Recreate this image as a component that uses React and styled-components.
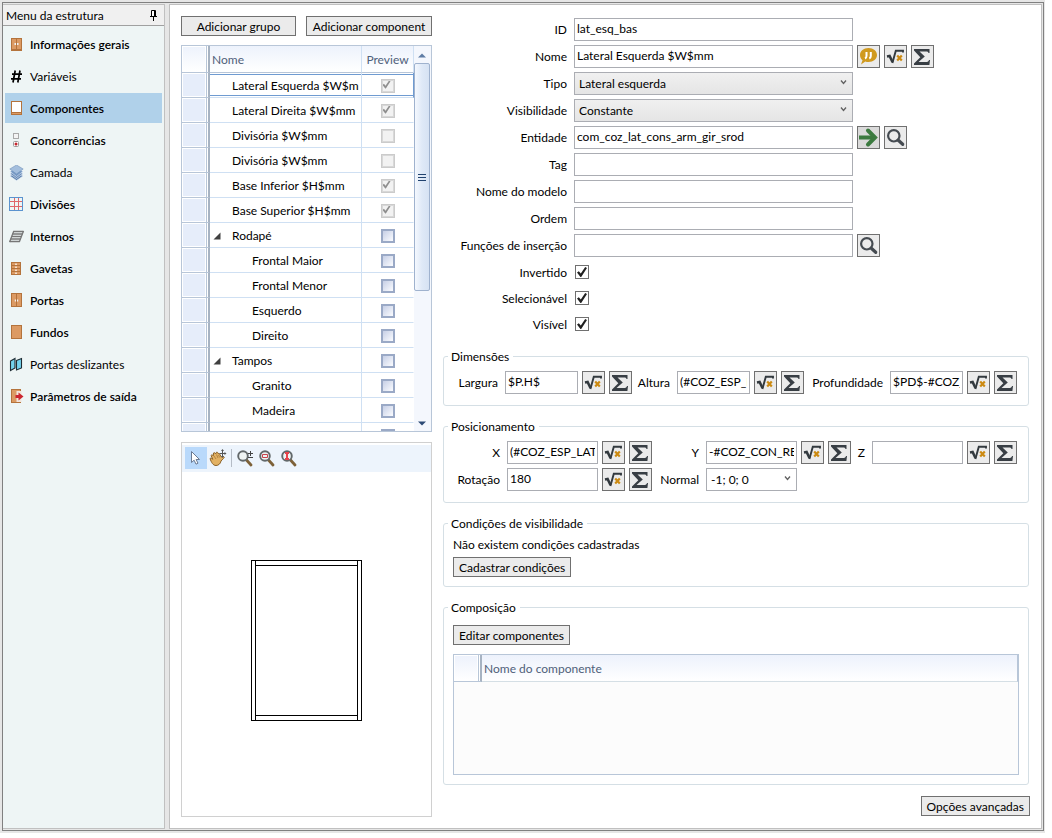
import React, { Fragment, useState } from 'react'
import styled, { createGlobalStyle, css, ThemeProvider } from 'styled-components'

const theme = {
  colors: {
    chrome: '#e6e6e6',
    chromeDark: '#808080',
    chromeLine: '#c0c0c0',
    side: '#eef5f5',
    sideActive: '#b0d1ea',
    control: '#ebebeb',
    controlBorder: '#707070',
    inputBorder: '#abadb3',
    grid: '#b8c6d8',
    gridLight: '#cfe0f3',
    gridHead: '#e6edfa',
    gridText: '#4f607a',
    group: '#d5dfe5',
    focus: '#6f9bd1'
  }
}

const GlobalStyle = createGlobalStyle`
  * {
    box-sizing: border-box;
  }

  body {
    background: #fff;
    color: #000;
    margin: 0;
  }

  body, button, input, select {
    font-family: Lato, 'Open Sans', sans-serif;
    font-size: 12px;
    line-height: 16px;
  }
`

/* ---------- window ---------- */

const Page = styled.div`
  display: flex;
  min-height: 100vh;
  padding: 0 7px 5px 0;
`

const Frame = styled.div`
  background: ${props => props.theme.colors.chrome};
  display: flex;
  flex: 1;
  padding: 2px 1px 2px 2px;
`

const Panes = styled.div`
  border: 1px solid ${props => props.theme.colors.chromeDark};
  display: flex;
  flex: 1;
  gap: 4px;
  min-width: 0;
  padding: 1px 1px 1px 0;
`

const Sidebar = styled.aside`
  background: ${props => props.theme.colors.side};
  border: 1px solid ${props => props.theme.colors.chromeLine};
  border-left: 0;
  display: flex;
  flex: 0 0 162px;
  flex-direction: column;
`

const SidebarHeader = styled.header`
  align-items: center;
  background: #f0f0f0;
  border-bottom: 1px solid #a0a0a0;
  display: flex;
  height: 21px;
  justify-content: space-between;
  padding: 1px 6px 0 3px;
`

const PinButton = styled.button`
  background: none;
  border: 0;
  display: flex;
  padding: 0;
`

const Menu = styled.nav`
  display: flex;
  flex-direction: column;
  gap: 2px;
  padding: 3px 2px;
`

const MenuItem = styled.a`
  align-items: center;
  background: ${props =>
    props.$active ? props.theme.colors.sideActive : 'transparent'};
  color: #000;
  display: flex;
  font-weight: ${props => (props.$bold ? 600 : 400)};
  gap: 5px;
  height: 30px;
  padding: 1px 0 0 4px;
  text-decoration: none;
  white-space: nowrap;

  svg {
    flex: none;
  }
`

const Content = styled.main`
  background: #fff;
  border: 1px solid ${props => props.theme.colors.chromeLine};
  display: flex;
  flex: 1;
  gap: 11px;
  min-width: 0;
  padding: 11px;
`

/* ---------- controls ---------- */

const Button = styled.button`
  background: ${props => props.theme.colors.control};
  border: 1px solid ${props => props.theme.colors.controlBorder};
  color: #000;
  height: 20px;
  overflow: hidden;
  padding: 2px 5px 0;
  white-space: nowrap;
`

const IconButton = styled.button`
  background: ${props =>
    props.$pressed ? '#dadada' : props.theme.colors.control};
  border: 1px solid ${props => props.theme.colors.controlBorder};
  display: flex;
  flex: none;
  height: 23px;
  padding: 0;
  width: 23px;
`

const TextBox = styled.input.attrs({ type: 'text' })`
  background: #fff;
  border: 1px solid ${props => props.theme.colors.inputBorder};
  color: #000;
  height: 23px;
  min-width: 0;
  outline: 0;
  padding: 0 2px 3px;
  width: 100%;
`

const SelectWrapper = styled.div`
  height: 23px;
  position: relative;

  svg {
    pointer-events: none;
    position: absolute;
    right: 6px;
    top: 7px;
  }
`

const SelectBox = styled.select`
  appearance: none;
  background: ${props =>
    props.$plain ? '#fff' : 'linear-gradient(#f0f0f0, #e5e5e5)'};
  border: 1px solid ${props => props.theme.colors.inputBorder};
  border-radius: 0;
  color: #000;
  height: 23px;
  padding: 1px 4px 0;
  width: 100%;
`

const CheckBox = styled.input.attrs({ type: 'checkbox' })`
  appearance: none;
  background: #fff;
  border: 1px solid ${props => props.theme.colors.controlBorder};
  display: grid;
  height: 14px;
  margin: 0;
  place-content: center;
  width: 14px;

  &:checked::after {
    background: #212121;
    clip-path: polygon(0 55%, 18% 42%, 38% 66%, 82% 0, 100% 10%, 42% 100%, 34% 100%);
    content: '';
    height: 10px;
    width: 10px;
  }
`

const GridCheckBox = styled(CheckBox)`
  border-color: #9aa9c6;
  margin: 1px auto 0;

  &::before {
    background: linear-gradient(135deg, #c6cfe6, #fbfcff);
    border: 1px solid #9aa9c6;
    content: '';
    grid-area: 1 / 1;
    height: 10px;
    width: 10px;
  }

  &:checked::after {
    grid-area: 1 / 1;
    height: 8px;
    margin: 1px;
    width: 8px;
  }

  &:disabled {
    border-color: #cbcbcb;
  }

  &:disabled::before {
    background: #f2f2f2;
    border-color: #d8d8d8;
  }

  &:disabled::after {
    background: #8f8f8f;
  }
`

/* ---------- left column ---------- */

const LeftColumn = styled.section`
  display: flex;
  flex: 0 0 251px;
  flex-direction: column;
`

const ButtonBar = styled.div`
  display: grid;
  gap: 10px;
  grid-template-columns: 115fr 126fr;
  margin-bottom: 9px;
`

const ListBox = styled.div`
  border: 1px solid ${props => props.theme.colors.grid};
  display: flex;
  flex: none;
  height: 387px;
  margin-bottom: 10px;
  overflow: hidden;
`

const ListTable = styled.table`
  align-self: flex-start;
  border-collapse: separate;
  border-spacing: 0;
  flex: 1;
  min-width: 0;
  table-layout: fixed;
  width: 100%;
`

const HeadCell = styled.th`
  background: linear-gradient(#edf2fc, #fff);
  border-bottom: 1px solid ${props => props.theme.colors.grid};
  border-right: 1px solid ${props => props.theme.colors.gridLight};
  color: ${props => props.theme.colors.gridText};
  font-weight: 400;
  height: 27px;
  padding: 2px 2px 0;
  text-align: ${props => (props.$center ? 'center' : 'left')};
  width: ${props => props.$width || 'auto'};
`

// selector column: thin line, white gap, then the frozen-column divider
const selectorEdge = css`
  border-right: 2px solid #a7b3c2;
  box-shadow: inset -1px 0 #fff, inset -2px 0 ${props => props.theme.colors.grid},
    inset -3px 0 #fff, inset 1px 1px #fff, inset 0 -1px #fff;
  padding: 0;
`

const SelectorHead = styled(HeadCell)`
  ${selectorEdge}
`

const SelectorCell = styled.td`
  background: ${props => props.theme.colors.gridHead};
  border-bottom: 1px solid ${props => props.theme.colors.grid};
  ${selectorEdge}
`

const focusLines = css`
  background: linear-gradient(
        ${props => props.theme.colors.focus},
        ${props => props.theme.colors.focus}
      )
      0 1px / 100% 1px no-repeat,
    linear-gradient(
        ${props => props.theme.colors.focus},
        ${props => props.theme.colors.focus}
      )
      0 22px / 100% 1px no-repeat;
`

const NameCell = styled.td`
  border-bottom: 1px solid ${props => props.theme.colors.gridLight};
  border-right: 1px solid ${props => props.theme.colors.gridLight};
  height: 25px;
  overflow: hidden;
  padding: 2px 2px 0 0;
  ${props => props.$focused && focusLines};
`

const NameText = styled.div`
  align-items: center;
  display: flex;
  overflow: hidden;
  padding-left: ${props => (props.$level === 2 ? '42px' : '22px')};
  position: relative;
  white-space: nowrap;
`

const Expander = styled.svg`
  left: 3px;
  position: absolute;
  top: 4px;
`

const PreviewCell = styled.td`
  border-bottom: 1px solid ${props => props.theme.colors.gridLight};
  border-right: 1px solid
    ${props => (props.$focused ? props.theme.colors.focus : '#fff')};
  padding: 0;
  ${props => props.$focused && focusLines};
`

const ScrollTrack = styled.div`
  align-items: center;
  background: #f4f7fd;
  display: flex;
  flex: 0 0 17px;
  flex-direction: column;
  padding: 0 1px 0 0;
`

const ScrollArrow = styled.button`
  background: none;
  border: 0;
  display: flex;
  flex: none;
  height: 17px;
  justify-content: center;
  padding: 7px 0 0;
  width: 16px;
`

const ScrollThumb = styled.div`
  align-items: center;
  background: linear-gradient(90deg, #f4f8fe, #dfe9f7 50%, #d6e2f3);
  border: 1px solid #9fb2ce;
  border-radius: 2px;
  display: flex;
  flex: 0 0 228px;
  justify-content: center;
  width: 16px;
`

const ScrollRest = styled.div`
  flex: 1;
`

const PreviewBox = styled.div`
  border: 1px solid #d0d0d0;
  display: flex;
  flex: 1;
  flex-direction: column;
  padding-top: 2px;
`

const Toolbar = styled.div`
  align-items: center;
  background: #edf4fc;
  display: flex;
  flex: none;
  height: 27px;
  padding: 0 3px 1px;
`

const Tool = styled.button`
  align-items: center;
  background: ${props => (props.$active ? '#b9d9fb' : 'transparent')};
  border: 0;
  display: flex;
  height: 22px;
  justify-content: center;
  padding: 0;
  width: 22px;
`

const ToolSeparator = styled.span`
  background: #b5bcc6;
  height: 18px;
  margin: 0 2px;
  width: 1px;
`

const Canvas = styled.div`
  display: flex;
  flex: 1;
  justify-content: center;
  padding: 88px 0;
`

/* ---------- form ---------- */

const FormColumn = styled.section`
  display: flex;
  flex: 1;
  flex-direction: column;
  gap: 12px;
  min-width: 0;
  padding: 2px 0 1px;
`

const Fields = styled.div`
  display: flex;
  flex-direction: column;
  gap: 4px;
  padding-bottom: 1px;
`

const FieldRow = styled.div`
  align-items: center;
  display: grid;
  gap: 4px;
  grid-template-columns: 127px minmax(0, 279px) 23px 23px 23px;
  min-height: ${props => (props.$check ? '22px' : '23px')};

  ${CheckBox} {
    margin-left: 1px;
  }
`

const Label = styled.label`
  padding-right: 3px;
  padding-top: 1px;
  text-align: right;
  white-space: nowrap;
`

const Group = styled.fieldset`
  border: 1px solid ${props => props.theme.colors.group};
  border-radius: 3px;
  margin: 0 1px 0 0;
  min-width: 0;
  padding: ${props => (props.$roomy ? '9px' : '6px 11px 11px 9px')};
`

const GroupTitle = styled.legend`
  height: 17px;
  line-height: 17px;
  margin-left: -5px;
  padding: 0 4px 0 3px;
`

const DimensionGrid = styled.div`
  align-items: center;
  display: grid;
  gap: 4px;
  grid-template-columns: 48px 1fr 23px 23px 37px 1fr 23px 23px 78px 1fr 23px 23px;
`

const PositionGrid = styled(DimensionGrid)`
  grid-template-columns: 50px 1fr 23px 23px 46px 1fr 23px 23px 13px 1fr 23px 23px;
`

const EmptyNote = styled.p`
  margin: -4px 0 4px;
`

const CompositionTable = styled.table`
  background: #fcfcfc;
  border: 1px solid ${props => props.theme.colors.grid};
  border-spacing: 0;
  height: 121px;
  margin-top: 9px;
  table-layout: fixed;
  width: 100%;
`

const CompositionHead = styled(HeadCell)`
  border-bottom-color: ${props => props.theme.colors.group};
  border-right-color: ${props => props.theme.colors.grid};
`

const FooterButton = styled(Button)`
  align-self: flex-end;
  margin-top: -1px;
`

/* ---------- icons ---------- */

const WOOD = '#dc9a63'
const WOOD_DARK = '#b4733c'

const menuIcons = {
  cabinet: (
    <>
      <rect x="2.5" y="1.5" width="10" height="12" fill={WOOD} stroke={WOOD_DARK} />
      <path d="M7.5 2v10M2 12.5h11" stroke={WOOD_DARK} />
      <path d="M5.5 7h1.5M8 7h1.5" stroke="#efefef" strokeWidth="2" />
      <path d="M2.5 13v1M12.5 13v1" stroke={WOOD_DARK} />
    </>
  ),
  hash: (
    <path
      d="M6.2 1.5 4 13.5M11 1.5 8.8 13.5M3 5.2h10M2 9.8h10"
      fill="none"
      stroke="#000"
      strokeWidth="1.7"
    />
  ),
  component: (
    <>
      <rect x="2.5" y=".5" width="10" height="13" fill="#fff" stroke={WOOD_DARK} />
      <path d="M2 11.5h11" stroke={WOOD_DARK} />
      <path d="M3 12.5h9" stroke={WOOD} />
    </>
  ),
  options: (
    <>
      <rect x="4.5" y=".5" width="5" height="5" fill="#f4f4f4" stroke="#a9a9a9" />
      <rect x="4.5" y="8.5" width="5" height="5" rx="1" fill="#fff" stroke="#9a9a9a" />
      <circle cx="7" cy="11" r="1.5" fill="#c4262e" />
    </>
  ),
  layers: (
    <>
      <path d="M1 11 7.5 7l6.5 4-6.500 4.500z" fill="#5f83b0" stroke="#e4edf7" strokeWidth=".6" />
      <path d="M1 8.700 7.5 5 14 8.700 7.5 13.500z" fill="#6a8dba" stroke="#e4edf7" strokeWidth=".6" />
      <path d="M1 6.500 7.5 3 14 6.500 7.5 11.500z" fill="#7598c4" stroke="#e4edf7" strokeWidth=".6" />
      <path d="M.8 4 7.500 0 14.200 4 7.500 9z" fill="#a3bedd" stroke="#7393ba" strokeWidth=".6" />
    </>
  ),
  divisions: (
    <>
      <path d="M5.5 1v13M9.5 1v13M1 4.500h13M1 9.500h13" stroke="#e0666a" />
      <rect x=".5" y=".5" width="13" height="13" fill="none" stroke="#5b93cf" />
    </>
  ),
  shelves: (
    <g stroke="#777" strokeWidth="1.3">
      <path d="M4.500 2.500h10M3.500 5h10M2.500 7.500h10M1.500 10h10M.5 12.500h10" />
      <path d="M4.800 2 .6 13M14.500 2l-4.200 11" />
    </g>
  ),
  drawers: (
    <>
      <rect x="2.5" y="1.5" width="9" height="12" fill={WOOD} stroke={WOOD_DARK} />
      <path d="M2 4.500h10M2 7.500h10M2 10.500h10" stroke={WOOD_DARK} />
      <path d="M6 3.200h2M6 6.200h2M6 9.200h2M6 12.200h2" stroke="#fff" />
    </>
  ),
  doors: (
    <>
      <rect x="2.5" y=".5" width="10" height="13" fill={WOOD} stroke={WOOD_DARK} />
      <path d="M7.5 1v12" stroke={WOOD_DARK} />
      <path d="M5.800 7.500h1.200M8 7.500h1.200" stroke="#f3f3f3" strokeWidth="2" />
    </>
  ),
  back: <rect x="2.5" y=".5" width="10" height="13" fill={WOOD} stroke={WOOD_DARK} />,
  sliding: (
    <g stroke="#1f2c33" strokeWidth="1.1">
      <path d="M1.500 4 6 1.500V11l-4.500 2.500z" fill="#74d3ee" />
      <path d="M7.500 3.500 12.500 1.500V11L7.500 13z" fill="#74d3ee" />
    </g>
  ),
  output: (
    <>
      <rect x="2.5" y=".5" width="9" height="13" fill={WOOD} stroke={WOOD_DARK} />
      <path d="M7.500 2h5v11h-5z" fill="#f3e5da" />
      <path d="M6.500 6h3V3.500L14.500 7.500l-5 4V9h-3z" fill="#cb2630" />
    </>
  )
}

const MenuIcon = ({ name }) => (
  <svg width="16" height="16" viewBox="0 0 16 16" aria-hidden="true">
    {menuIcons[name]}
  </svg>
)

const ButtonIcon = ({ children }) => (
  <svg width="21" height="21" viewBox="1 1 21 21" fill="none" aria-hidden="true">
    {children}
  </svg>
)

const RootIcon = () => (
  <ButtonIcon>
    <path d="M3 11.500 5.600 11 8.500 17" stroke="#333a3f" strokeWidth="2.600" />
    <path d="M8.400 18 11.800 5.700H19V7.500" stroke="#333a3f" strokeWidth="1.900" />
    <path d="m13.200 10.500 4.600 5M17.800 10.500l-4.600 5" stroke="#cc8a12" strokeWidth="2.200" />
  </ButtonIcon>
)

const SumIcon = () => (
  <ButtonIcon>
    <path
      d="M3 4h15.500v4h-1c-.3-1.300-1-1.600-2.500-1.600H8.500l5.300 5.100-6.300 5.600H15c1.700 0 2.600-.4 3-2h1l-.6 4.900H3v-1.600l6.300-6.100L3 5.600z"
      fill="#383e44"
    />
  </ButtonIcon>
)

const SearchIcon = () => (
  <ButtonIcon>
    <circle cx="9.800" cy="9.800" r="5.700" stroke="#454b51" strokeWidth="2.200" />
    <path d="m14.300 14.300 4.400 4" stroke="#454b51" strokeWidth="3.200" strokeLinecap="round" />
  </ButtonIcon>
)

const GoIcon = () => (
  <ButtonIcon>
    <path d="M2 11.500h16" stroke="#3b7a3f" strokeWidth="4" />
    <path d="m11 4.500 7 7-7 7" stroke="#3b7a3f" strokeWidth="4" strokeLinecap="round" />
  </ButtonIcon>
)

const CommentIcon = () => (
  <ButtonIcon>
    <path
      d="M11.500 3c4.900 0 8.500 3.100 8.500 7s-3.600 7-8.500 7c-1.300 0-2.200-.1-3.200-.5L4 19.500l1.500-4.300C4 13.900 3 12.100 3 10c0-3.900 3.600-7 8.500-7z"
      fill="#d09a1e"
    />
    <path d="M9.500 7v4c0 1.500-.4 2-1.500 2.500M13.800 7v4c0 1.500-.4 2-1.500 2.500" stroke="#fff" strokeWidth="2" />
  </ButtonIcon>
)

const PinIcon = () => (
  <svg width="9" height="11" viewBox="0 0 9 11" aria-hidden="true">
    <path d="M2.500 6V.5h4V6" fill="#fff" stroke="#000" />
    <path d="M5.500 1v5M1 6.500h7M4.500 7v4" stroke="#000" />
  </svg>
)

const Lens = ({ children }) => (
  <svg width="18" height="18" viewBox="0 0 18 18" fill="none" aria-hidden="true">
    <path d="m10.500 11 4.500 5" stroke="#7d6138" strokeWidth="2.800" strokeLinecap="round" />
    <circle cx="7" cy="7" r="4.800" fill="#eef3f3" stroke="#62686a" strokeWidth="1.900" />
    {children}
  </svg>
)

const CursorIcon = () => (
  <svg width="18" height="18" viewBox="0 0 18 18" aria-hidden="true">
    <path
      d="M4.500 2.500v11l2.600-2.300 1.900 4 2-1-1.900-3.700h3.400z"
      fill="#fff"
      stroke="#6b7b93"
    />
  </svg>
)

const HandIcon = () => (
  <svg width="18" height="18" viewBox="0 0 18 18" fill="none" aria-hidden="true">
    <path
      d="M1 9.500c1-.8 2 .2 2.800.8L2 6.500c.8-1 1.700-.5 2.300.3L4.500 4c1-.8 1.800 0 2 1l1-1.800c1-.2 1.600.6 1.600 1.500 1-.4 1.700.1 1.900 1.100l1.400 2.200 2.200-.5c1 .5.6 1.500-.2 2L12 12c-.6 2.800-2.500 4.500-5 4.500-3 0-4.600-3-6-7z"
      fill="#e2b163"
      stroke="#8a6128"
    />
    <path d="m5 7 2 3M7.500 5.500l1.500 3.500M9.500 6l1.200 2.500" stroke="#a87a38" strokeWidth=".8" />
    <path d="M13.500 1v7M10.500 4.500h6" stroke="#555" />
    <path d="m13.500 0-1.500 2h3zM13.500 9 12 7h3zM17.500 4.500l-2-1.500v3z" fill="#555" />
  </svg>
)

const Chevron = () => (
  <svg width="7" height="7" viewBox="0 0 7 7" fill="none" aria-hidden="true">
    <path d="m1 1.500 2.500 3 2.500-3" stroke="#606060" strokeWidth="1.300" />
  </svg>
)

const CabinetDrawing = () => (
  <svg width="111" height="161" viewBox="0 0 111 161" fill="none" stroke="#000">
    <rect x=".5" y=".5" width="110" height="160" />
    <path d="M4.500 0v161M106.500 0v161M4 5.500h103M4 155.500h103" />
  </svg>
)

/* ---------- data ---------- */

const MENU = [
  { label: 'Informações gerais', icon: 'cabinet', bold: true },
  { label: 'Variáveis', icon: 'hash' },
  { label: 'Componentes', icon: 'component', bold: true },
  { label: 'Concorrências', icon: 'options', bold: true },
  { label: 'Camada', icon: 'layers' },
  { label: 'Divisões', icon: 'divisions', bold: true },
  { label: 'Internos', icon: 'shelves', bold: true },
  { label: 'Gavetas', icon: 'drawers', bold: true },
  { label: 'Portas', icon: 'doors', bold: true },
  { label: 'Fundos', icon: 'back', bold: true },
  { label: 'Portas deslizantes', icon: 'sliding' },
  { label: 'Parâmetros de saída', icon: 'output', bold: true }
]

const COMPONENTS = [
  { name: 'Lateral Esquerda $W$mm', locked: true, checked: true, focused: true },
  { name: 'Lateral Direita $W$mm', locked: true, checked: true },
  { name: 'Divisória $W$mm', locked: true },
  { name: 'Divisória $W$mm', locked: true },
  { name: 'Base Inferior $H$mm', locked: true, checked: true },
  { name: 'Base Superior $H$mm', locked: true, checked: true },
  { name: 'Rodapé', parent: true },
  { name: 'Frontal Maior', level: 2 },
  { name: 'Frontal Menor', level: 2 },
  { name: 'Esquerdo', level: 2 },
  { name: 'Direito', level: 2 },
  { name: 'Tampos', parent: true },
  { name: 'Granito', level: 2 },
  { name: 'Madeira', level: 2 },
  { name: '', level: 2 }
]

const FormulaButtons = ({ field }) => (
  <Fragment>
    <IconButton type="button" aria-label={`Fórmula ${field}`}>
      <RootIcon />
    </IconButton>
    <IconButton type="button" aria-label={`Soma ${field}`}>
      <SumIcon />
    </IconButton>
  </Fragment>
)

const TextField = ({ id, label, value = '', children }) => (
  <FieldRow>
    <Label htmlFor={id}>{label}</Label>
    <TextBox id={id} defaultValue={value} />
    {children}
  </FieldRow>
)

const Select = ({ id, value, plain }) => (
  <SelectWrapper>
    <SelectBox id={id} $plain={plain} defaultValue={value}>
      <option>{value}</option>
    </SelectBox>
    <Chevron />
  </SelectWrapper>
)

const FormulaField = ({ id, label, value = '' }) => (
  <Fragment>
    <Label htmlFor={id}>{label}</Label>
    <TextBox id={id} defaultValue={value} />
    <FormulaButtons field={label} />
  </Fragment>
)

const CheckField = ({ id, label }) => (
  <FieldRow $check>
    <Label htmlFor={id}>{label}</Label>
    <CheckBox id={id} defaultChecked />
  </FieldRow>
)

const StructureMenu = () => {
  const [active, setActive] = useState('Componentes')
  return (
    <Sidebar>
      <SidebarHeader>
        <span>Menu da estrutura</span>
        <PinButton type="button" aria-label="Fixar">
          <PinIcon />
        </PinButton>
      </SidebarHeader>
      <Menu>
        {MENU.map(item => (
          <MenuItem
            key={item.label}
            href="#"
            $bold={item.bold}
            $active={item.label === active}
            onClick={() => setActive(item.label)}
          >
            <MenuIcon name={item.icon} />
            {item.label}
          </MenuItem>
        ))}
      </Menu>
    </Sidebar>
  )
}

const ComponentList = () => (
  <ListBox>
    <ListTable>
      <thead>
        <tr>
          <SelectorHead $width="28px" />
          <HeadCell>Nome</HeadCell>
          <HeadCell $center $width="52px">
            Preview
          </HeadCell>
        </tr>
      </thead>
      <tbody>
        {COMPONENTS.map((item, index) => (
          <tr key={index}>
            <SelectorCell />
            <NameCell $focused={item.focused}>
              <NameText $level={item.level}>
                {item.parent && (
                  <Expander width="8" height="8" viewBox="0 0 8 8">
                    <path d="M7.500.5v7h-7z" fill="#404040" />
                  </Expander>
                )}
                {item.name}
              </NameText>
            </NameCell>
            <PreviewCell $focused={item.focused}>
              <GridCheckBox
                aria-label={`Preview ${item.name}`}
                defaultChecked={item.checked}
                disabled={item.locked}
              />
            </PreviewCell>
          </tr>
        ))}
      </tbody>
    </ListTable>
    <ScrollTrack>
      <ScrollArrow type="button" aria-label="Rolar para cima">
        <svg width="8" height="5" viewBox="0 0 8 5">
          <path d="M0 4.500 4 .5l4 4z" fill="#5f7da5" />
        </svg>
      </ScrollArrow>
      <ScrollThumb>
        <svg width="8" height="7" viewBox="0 0 8 7">
          <path d="M0 .5h8M0 3.500h8M0 6.500h8" stroke="#20426f" />
        </svg>
      </ScrollThumb>
      <ScrollRest />
      <ScrollArrow type="button" aria-label="Rolar para baixo">
        <svg width="8" height="5" viewBox="0 0 8 5">
          <path d="M0 .5h8l-4 4z" fill="#2c4a75" />
        </svg>
      </ScrollArrow>
    </ScrollTrack>
  </ListBox>
)

const Preview = () => (
  <PreviewBox>
    <Toolbar>
      <Tool type="button" aria-label="Selecionar" $active>
        <CursorIcon />
      </Tool>
      <Tool type="button" aria-label="Mover">
        <HandIcon />
      </Tool>
      <ToolSeparator />
      <Tool type="button" aria-label="Zoom">
        <Lens>
          <path d="M12 4.500h5M14.500 2v5M12 8.500h5" stroke="#444" />
        </Lens>
      </Tool>
      <Tool type="button" aria-label="Zoom janela">
        <Lens>
          <path d="M4.500 5.500h5v3h-5z" stroke="#c8434b" />
        </Lens>
      </Tool>
      <Tool type="button" aria-label="Zoom extensão">
        <Lens>
          <path d="M5 4h4M5 10h4M7 4v6" stroke="#e8444c" strokeWidth="2" />
        </Lens>
      </Tool>
    </Toolbar>
    <Canvas>
      <CabinetDrawing />
    </Canvas>
  </PreviewBox>
)

const ComponentForm = () => (
  <FormColumn>
    <Fields>
      <TextField id="id" label="ID" value="lat_esq_bas" />
      <TextField id="nome" label="Nome" value="Lateral Esquerda $W$mm">
        <IconButton type="button" aria-label="Comentário">
          <CommentIcon />
        </IconButton>
        <FormulaButtons field="Nome" />
      </TextField>
      <FieldRow>
        <Label htmlFor="tipo">Tipo</Label>
        <Select id="tipo" value="Lateral esquerda" />
      </FieldRow>
      <FieldRow>
        <Label htmlFor="visibilidade">Visibilidade</Label>
        <Select id="visibilidade" value="Constante" />
      </FieldRow>
      <TextField id="entidade" label="Entidade" value="com_coz_lat_cons_arm_gir_srod">
        <IconButton type="button" aria-label="Ir para entidade" $pressed>
          <GoIcon />
        </IconButton>
        <IconButton type="button" aria-label="Procurar entidade">
          <SearchIcon />
        </IconButton>
      </TextField>
      <TextField id="tag" label="Tag" />
      <TextField id="modelo" label="Nome do modelo" />
      <TextField id="ordem" label="Ordem" />
      <TextField id="funcoes" label="Funções de inserção">
        <IconButton type="button" aria-label="Procurar função">
          <SearchIcon />
        </IconButton>
      </TextField>
      <CheckField id="invertido" label="Invertido" />
      <CheckField id="selecionavel" label="Selecionável" />
      <CheckField id="visivel" label="Visível" />
    </Fields>

    <Group>
      <GroupTitle>Dimensões</GroupTitle>
      <DimensionGrid>
        <FormulaField id="largura" label="Largura" value="$P.H$" />
        <FormulaField id="altura" label="Altura" value="(#COZ_ESP_LAT" />
        <FormulaField id="profundidade" label="Profundidade" value="$PD$-#COZ_CON" />
      </DimensionGrid>
    </Group>

    <Group>
      <GroupTitle>Posicionamento</GroupTitle>
      <PositionGrid>
        <FormulaField id="x" label="X" value="(#COZ_ESP_LAT" />
        <FormulaField id="y" label="Y" value="-#COZ_CON_REC" />
        <FormulaField id="z" label="Z" />
        <FormulaField id="rotacao" label="Rotação" value="180" />
        <Label htmlFor="normal">Normal</Label>
        <Select id="normal" value="-1; 0; 0" plain />
      </PositionGrid>
    </Group>

    <Group $roomy>
      <GroupTitle>Condições de visibilidade</GroupTitle>
      <EmptyNote>Não existem condições cadastradas</EmptyNote>
      <Button type="button">Cadastrar condições</Button>
    </Group>

    <Group $roomy>
      <GroupTitle>Composição</GroupTitle>
      <Button type="button">Editar componentes</Button>
      <CompositionTable>
        <thead>
          <tr>
            <SelectorHead $width="28px" />
            <CompositionHead>Nome do componente</CompositionHead>
          </tr>
        </thead>
        <tbody>
          <tr>
            <td colSpan={2} />
          </tr>
        </tbody>
      </CompositionTable>
    </Group>

    <FooterButton type="button">Opções avançadas</FooterButton>
  </FormColumn>
)

const App = () => (
  <ThemeProvider theme={theme}>
    <GlobalStyle />
    <Page>
      <Frame>
        <Panes>
          <StructureMenu />
          <Content>
            <LeftColumn>
              <ButtonBar>
                <Button type="button">Adicionar grupo</Button>
                <Button type="button">Adicionar component</Button>
              </ButtonBar>
              <ComponentList />
              <Preview />
            </LeftColumn>
            <ComponentForm />
          </Content>
        </Panes>
      </Frame>
    </Page>
  </ThemeProvider>
)

export default App
